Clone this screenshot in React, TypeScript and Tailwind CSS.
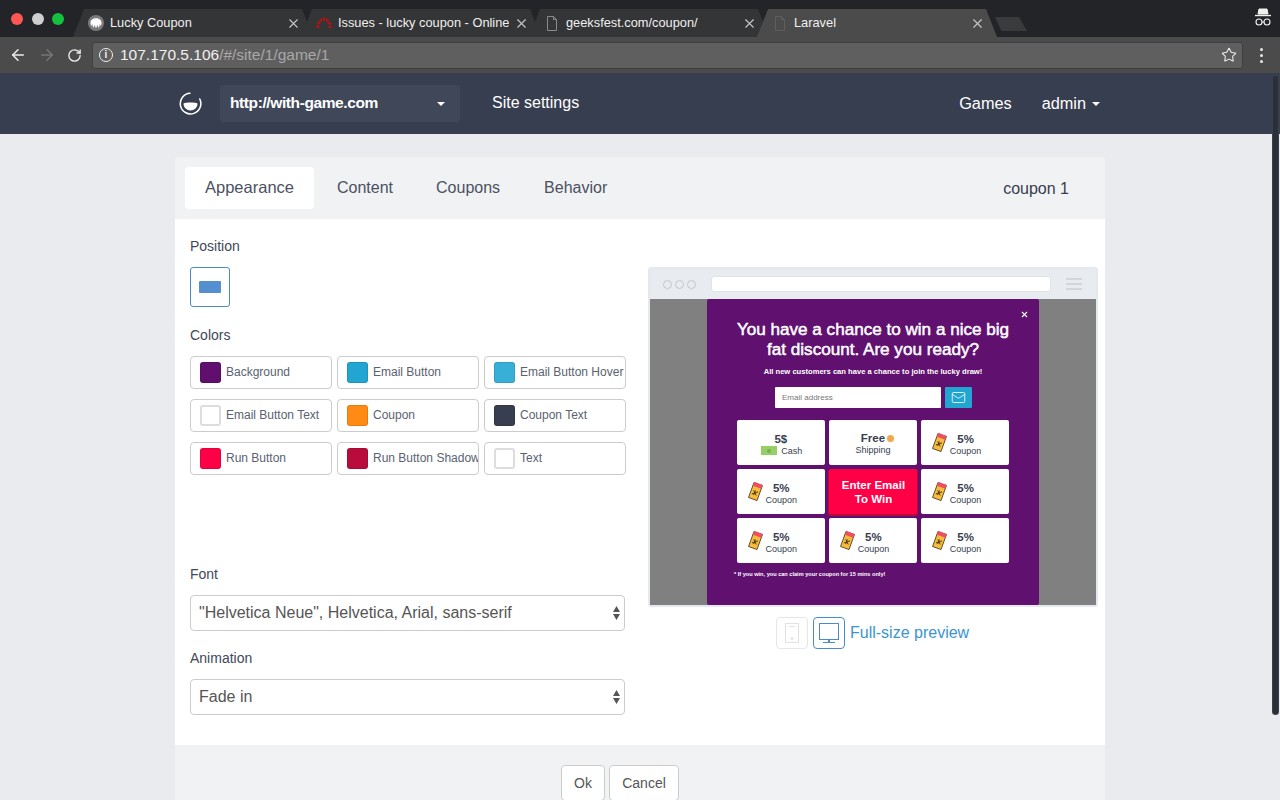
import React from "react";
import { ArrowLeft, ArrowRight, RotateCw, Star, X, Mail } from "lucide-react";

const Ticket = () => (
  <svg width="15" height="19" viewBox="0 0 15 19" className="shrink-0">
    <g transform="rotate(20 7.5 9.5)">
      <rect x="3" y="1.5" width="9" height="16" fill="#f9bb3c" stroke="#4a3c1c" strokeWidth="0.8" />
      <rect x="3" y="1" width="9" height="4" fill="#ee4f63" />
      <path d="M5 13l5-4M5.5 9l4 4M7 8.5v5" stroke="#4a3c1c" strokeWidth="0.9" />
    </g>
  </svg>
);

const PrizeCell = ({ title, sub }: { title: string; sub: string }) => (
  <div className="bg-white rounded-[2px] h-[45px] flex items-center pl-[11px] gap-[3px]">
    <Ticket />
    <div className="flex flex-col items-center text-[#373e4f] pt-[4px]">
      <span className="text-[11.5px] leading-[12px] font-bold">{title}</span>
      <span className="text-[9px] leading-[12px]">{sub}</span>
    </div>
  </div>
);

const ColorButton = ({ color, label, light }: { color: string; label: string; light?: boolean }) => (
  <div className="h-[33px] border border-[#ccc] rounded-[4px] flex items-center pl-[9px] overflow-hidden whitespace-nowrap bg-white">
    <span
      className={
        "w-[21px] h-[21px] rounded-[3px] shrink-0 border " + (light ? "border-[#ddd] border-2" : "border-black/10")
      }
      style={{ backgroundColor: color }}
    />
    <span className="ml-[5px] mb-[2px] text-[12px] text-[#5a6270]">{label}</span>
  </div>
);

const Tab = ({
  title,
  active,
  icon,
  first,
}: {
  title: string;
  active?: boolean;
  icon: React.ReactNode;
  first?: boolean;
}) => (
  <div
    className={
      "w-[240px] h-[28px] flex items-center pl-[15px] pr-[12px] [clip-path:polygon(0_100%,11px_0,229px_0,240px_100%)] " +
      (first ? "" : "ml-[-12px] ") +
      (active ? "bg-[#4b4b4b] relative" : "bg-[#343537]")
    }
  >
    <span className="w-[16px] h-[16px] shrink-0 flex items-center justify-center">{icon}</span>
    <span className="ml-[6px] text-[12.8px] text-[#f0f0f0] flex-1 overflow-hidden whitespace-nowrap">{title}</span>
    <X size={15} strokeWidth={1.7} className="text-[#c8c8c8] ml-[5px] shrink-0" />
  </div>
);

const FileIcon = ({ color }: { color: string }) => (
  <svg width="12" height="15" viewBox="0 0 12 15" fill="none" stroke={color} strokeWidth="1">
    <path d="M1.5.5h6l3 3v11h-9zM7.5.5v3h3" />
  </svg>
);

const SelectBox = ({ value }: { value: string }) => (
  <div className="h-[36px] border border-[#ccc] rounded-[4px] flex items-center justify-between pl-[8px] pr-[3px] text-[16px] text-[#555] bg-white">
    <span>{value}</span>
    <svg width="9" height="16" viewBox="0 0 9 16" fill="#555">
      <path d="M4.5 1L8 7H1zM4.5 15L1 9h7z" />
    </svg>
  </div>
);

export default function App() {
  return (
    <div className="relative h-[800px] overflow-hidden bg-[#e9ebee] font-['Liberation_Sans',Arial,sans-serif]">
      {/* browser tabs */}
      <div className="h-[37px] bg-[#232427] flex items-end">
        <div className="flex items-center gap-[8.5px] pl-[11px] pb-[12px] w-[73px] shrink-0">
          <span className="w-[12px] h-[12px] rounded-full bg-[#fc5753] shrink-0" />
          <span className="w-[12px] h-[12px] rounded-full bg-[#cfcfcf] shrink-0" />
          <span className="w-[12px] h-[12px] rounded-full bg-[#14c23f] shrink-0" />
        </div>
        <Tab
          first
          title="Lucky Coupon"
          icon={
            <svg width="16" height="16" viewBox="0 0 16 16">
              <circle cx="8" cy="8" r="8" fill="#7a7a7a" />
              <path
                d="M2.5 9V7.5C2.5 5 5 3.2 8 3.2s5.5 1.8 5.5 4.3V9l-.8 2-.9-2-.6 3.2H10L9.2 9.5 8.6 12.5H7.4L6.8 9.5 6 12.2H5L4.2 9l-.9 2z"
                fill="#fff"
              />
            </svg>
          }
        />
        <Tab
          title="Issues - lucky coupon - Online"
          icon={
            <svg width="16" height="12" viewBox="0 0 16 12" fill="none" stroke="#b31414" strokeWidth="3" strokeDasharray="2.6 1">
              <path d="M1.8 11C2.2 5 5 2 8 2s5.800 3 6.200 9" />
            </svg>
          }
        />
        <Tab title="geeksfest.com/coupon/" icon={<FileIcon color="#8a8a8a" />} />
        <Tab active title="Laravel" icon={<FileIcon color="#5e5e5e" />} />
        <div className="w-[32px] h-[14px] ml-[-2px] mb-[6px] bg-[#3a3b3d] [clip-path:polygon(0_0,75%_0,100%_100%,20%_100%)]" />
        <div className="ml-auto mr-[8px] mb-[9px]">
          <svg width="18" height="20" viewBox="0 0 18 20" fill="none" stroke="#f0f0f0">
            <path d="M5 1h8l1 5H4z" fill="#f0f0f0" />
            <path d="M1 7.500h16" strokeWidth="1.400" />
            <circle cx="5" cy="14" r="3" strokeWidth="1.100" />
            <circle cx="13" cy="14" r="3" strokeWidth="1.100" />
            <path d="M8 14h2" strokeWidth="1" />
          </svg>
        </div>
      </div>

      {/* browser toolbar */}
      <div className="h-[36px] bg-[#4b4b4b] flex items-center">
        <ArrowLeft size={18} strokeWidth={2} className="ml-[9px] text-[#ededed]" />
        <ArrowRight size={18} strokeWidth={2} className="ml-[11px] text-[#767676]" />
        <RotateCw size={15} strokeWidth={2.2} className="ml-[11px] text-[#ededed]" />
        <div className="ml-[10px] w-[1151px] h-[27px] bg-[#5f5f5f] border border-[#3f3f3f] rounded-[3px] flex items-center pl-[6px] pr-[5px]">
          <span className="w-[14px] h-[14px] rounded-full border-[1.5px] border-[#f0f0f0] text-[#f0f0f0] text-[10px] font-bold leading-[11px] text-center shrink-0">
            i
          </span>
          <span className="ml-[7px] text-[15.5px] text-[#f0f0f0]">107.170.5.106</span>
          <span className="text-[15.5px] text-[#a8a8a8]">/#/site/1/game/1</span>
          <Star size={16} strokeWidth={1.6} className="ml-auto text-[#ededed]" />
        </div>
        <div className="ml-[17px] flex flex-col gap-[3px]">
          <span className="w-[3px] h-[3px] rounded-full bg-[#e8e8e8]" />
          <span className="w-[3px] h-[3px] rounded-full bg-[#e8e8e8]" />
          <span className="w-[3px] h-[3px] rounded-full bg-[#e8e8e8]" />
        </div>
      </div>

      {/* site nav */}
      <div className="h-[61px] bg-[#373e4f] flex items-center pl-[179px] pr-[180px] text-white text-[16px]">
        <svg width="23" height="23" viewBox="0 0 23 23" fill="none" className="shrink-0">
          <path d="M11 1.300A10.300 10.300 0 1 0 20.800 7" stroke="#fff" strokeWidth="1.500" strokeLinecap="round" />
          <path d="M4.500 11.500C7 10.300 16 10.300 18.500 11.500C18.500 15.500 15.300 18.500 11.500 18.500S4.500 15.500 4.500 11.500z" fill="#fff" />
        </svg>
        <div className="ml-[18px] w-[240px] h-[37px] bg-[#3f4759] rounded-[3px] flex items-center justify-between pl-[10px] pr-[15px]">
          <span className="font-bold text-[15.5px] tracking-[-0.4px] mb-[2px]">http://with-game.com</span>
          <span className="w-0 h-0 border-x-[4px] border-x-transparent border-t-[4px] border-t-white" />
        </div>
        <span className="ml-[32px] mb-[2px]">Site settings</span>
        <span className="ml-auto text-[16.3px]">Games</span>
        <span className="ml-[30px] text-[16.3px]">admin</span>
        <span className="ml-[6px] w-0 h-0 border-x-[4px] border-x-transparent border-t-[4px] border-t-white" />
      </div>

      {/* card */}
      <div className="mt-[23px] ml-[175px] w-[930px] rounded-[3px] overflow-hidden">
        <div className="h-[62px] bg-[#f1f2f4] flex items-center pl-[10px] pr-[36px] text-[16px] text-[#4b5161]">
          <div className="h-[42px] w-[129px] pl-[20px] bg-white rounded-[4px] flex items-center text-[16.5px] pb-[2px]">Appearance</div>
          <div className="ml-[3px] h-[42px] px-[20px] flex items-center">Content</div>
          <div className="ml-[3px] h-[42px] px-[20px] flex items-center">Coupons</div>
          <div className="ml-[4px] h-[42px] px-[20px] flex items-center">Behavior</div>
          <span className="ml-auto mt-[2px] text-[#373e4f]">coupon 1</span>
        </div>

        <div className="bg-white flex pl-[15px] pb-[30px]">
          {/* form column */}
          <div className="w-[436px] pt-[17px] text-[14px] text-[#414858]">
            <div className="h-[20px] leading-[20px]">Position</div>
            <div className="mt-[11px] w-[40px] h-[40px] border border-[#4a8bcb] rounded-[3px] flex items-center justify-center">
              <span className="w-[22px] h-[12px] bg-[#5490cf] rounded-[1px]" />
            </div>
            <div className="mt-[18px] h-[20px] leading-[20px]">Colors</div>
            <div className="mt-[11px] grid grid-cols-3 gap-x-[5px] gap-y-[10px]">
              <ColorButton color="#600f6e" label="Background" />
              <ColorButton color="#22a5d0" label="Email Button" />
              <ColorButton color="#38afd6" label="Email Button Hover" />
              <ColorButton color="#ffffff" label="Email Button Text" light />
              <ColorButton color="#ff8a14" label="Coupon" />
              <ColorButton color="#373e4f" label="Coupon Text" />
              <ColorButton color="#ff0047" label="Run Button" />
              <ColorButton color="#b80d3c" label="Run Button Shadow" />
              <ColorButton color="#ffffff" label="Text" light />
            </div>
            <div className="mt-[89px] h-[20px] leading-[20px]">Font</div>
            <div className="mt-[11px] w-[435px]">
              <SelectBox value={'"Helvetica Neue", Helvetica, Arial, sans-serif'} />
            </div>
            <div className="mt-[17px] h-[20px] leading-[20px]">Animation</div>
            <div className="mt-[11px] w-[435px]">
              <SelectBox value="Fade in" />
            </div>
          </div>

          {/* preview column */}
          <div className="ml-[22px] w-[450px] pt-[48px]">
            <div className="h-[340px] border-2 border-[#e5e8ee] rounded-[3px] flex flex-col">
              <div className="h-[30px] shrink-0 bg-[#e8ebf0] flex items-center pl-[13px] pr-[14px]">
                <span className="w-[9px] h-[9px] rounded-full border border-[#c4c7cc]" />
                <span className="ml-[3px] w-[9px] h-[9px] rounded-full border border-[#c4c7cc]" />
                <span className="ml-[3px] w-[9px] h-[9px] rounded-full border border-[#c4c7cc]" />
                <span className="ml-[15px] w-[340px] h-[16px] bg-white rounded-[3px] border border-[#e0e3ea]" />
                <div className="ml-auto w-[16px] flex flex-col gap-[3px]">
                  <span className="h-[2px] bg-[#d3d6dc]" />
                  <span className="h-[2px] bg-[#d3d6dc]" />
                  <span className="h-[2px] bg-[#d3d6dc]" />
                </div>
              </div>
              <div className="flex-1 bg-[#808080] flex justify-center min-h-0">
                <div className="relative w-[332px] bg-[#60106e] rounded-[2px] flex flex-col items-center text-white">
                  <X size={9} strokeWidth={3} className="absolute right-[10px] top-[11px] text-white" />
                  <div className="mt-[21px] text-[17.1px] leading-[20px] text-center w-[290px] [-webkit-text-stroke:0.5px_white]">
                    You have a chance to win a nice big fat discount. Are you ready?
                  </div>
                  <div className="mt-[7px] text-[7.6px] leading-[10px] font-bold whitespace-nowrap">
                    All new customers can have a chance to join the lucky draw!
                  </div>
                  <div className="mt-[10px] flex h-[21px] ml-[1px]">
                    <div className="w-[166px] bg-white rounded-[1px] text-[8px] text-[#777] pl-[7px] pt-[1px] flex items-center">
                      Email address
                    </div>
                    <div className="ml-[4px] w-[27px] bg-[#22a5d0] rounded-[1px] flex items-center justify-center">
                      <Mail size={15} strokeWidth={1.3} className="text-white" />
                    </div>
                  </div>
                  <div className="mt-[12px] w-[273px] grid grid-cols-3 gap-x-[3.5px] gap-y-[4px]">
                    <div className="bg-white rounded-[2px] h-[45px] flex flex-col items-center justify-center text-[#373e4f] pt-[4px]">
                      <span className="text-[11.5px] leading-[12px] font-bold">5$</span>
                      <div className="flex items-center gap-[4px] ml-[2px]">
                        <span className="w-[16px] h-[9px] bg-[#95cf66] flex items-center justify-center">
                          <span className="w-[4px] h-[4px] rounded-full bg-[#76b24c]" />
                        </span>
                        <span className="text-[9px] leading-[12px]">Cash</span>
                      </div>
                    </div>
                    <div className="bg-white rounded-[2px] h-[45px] flex flex-col items-center justify-center text-[#373e4f] pt-[3px]">
                      <div className="flex items-center gap-[2px] ml-[9px]">
                        <span className="text-[11.5px] leading-[12px] font-bold">Free</span>
                        <span className="w-[7px] h-[7px] rounded-full bg-[#f3a74a]" />
                      </div>
                      <span className="text-[9px] leading-[12px]">Shipping</span>
                    </div>
                    <PrizeCell title="5%" sub="Coupon" />
                    <PrizeCell title="5%" sub="Coupon" />
                    <div className="h-[45px] bg-[#ff0047] rounded-[2px] shadow-[0_1px_0_1px_#b80d3c] flex items-center justify-center text-center text-[11.5px] leading-[14px] font-bold pt-[1px] pl-[1px]">
                      Enter Email
                      <br />
                      To Win
                    </div>
                    <PrizeCell title="5%" sub="Coupon" />
                    <PrizeCell title="5%" sub="Coupon" />
                    <PrizeCell title="5%" sub="Coupon" />
                    <PrizeCell title="5%" sub="Coupon" />
                  </div>
                  <div className="mt-[7px] self-start ml-[27px] text-[5.6px] leading-[8px] font-bold whitespace-nowrap">
                    * If you win, you can claim your coupon for 15 mins only!
                  </div>
                </div>
              </div>
            </div>
            <div className="mt-[10px] flex items-center pl-[128px]">
              <div className="w-[32px] h-[32px] border border-[#e3e6ec] rounded-[4px] flex items-center justify-center">
                <svg width="14" height="20" viewBox="0 0 14 20" fill="none" stroke="#dfe2e8">
                  <rect x="0.5" y="0.5" width="13" height="19" />
                  <path d="M4 3.500h6" />
                  <circle cx="7" cy="15.500" r="1" fill="#dfe2e8" />
                </svg>
              </div>
              <div className="ml-[5px] w-[32px] h-[32px] border border-[#4a8bcb] rounded-[4px] flex items-center justify-center">
                <svg width="20" height="20" viewBox="0 0 20 20" fill="none" stroke="#4a8bcb">
                  <rect x="0.5" y="0.5" width="19" height="16" />
                  <path d="M4 19.500h12" />
                  <path d="M10 17v2" strokeWidth="2" />
                </svg>
              </div>
              <span className="ml-[5px] text-[16px] text-[#3a95cf]">Full-size preview</span>
            </div>
          </div>
        </div>

        <div className="h-[80px] bg-[#f1f2f4] flex items-start pt-[20px] pl-[386px] text-[14px] text-[#555]">
          <div className="h-[36px] w-[44px] bg-white border border-[#ccc] rounded-[4px] flex items-center justify-center">Ok</div>
          <div className="ml-[4px] h-[36px] w-[70px] bg-white border border-[#ccc] rounded-[4px] flex items-center justify-center">
            Cancel
          </div>
        </div>
      </div>

      {/* overlay scrollbar */}
      <div className="absolute right-[1px] top-[75px] w-[7px] h-[640px] rounded-full bg-[#2b2f3a] border border-[#555a66]/40" />
    </div>
  );
}
